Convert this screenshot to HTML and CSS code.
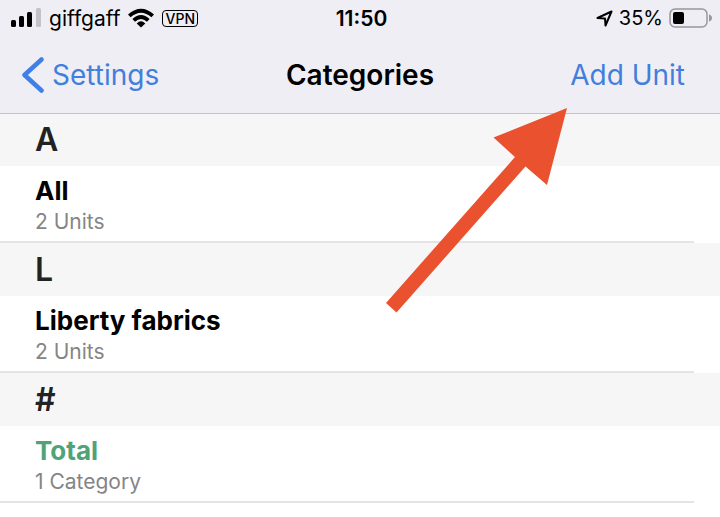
FILE: index.html
```html
<!DOCTYPE html>
<html lang="en">
<head>
    <meta charset="UTF-8">
    <meta name="viewport" content="width=device-width, initial-scale=1.0">
    <title>Categories</title>
    <link rel="stylesheet" href="styles.css">
</head>
<body>
    <header class="top">
        <div class="status-bar">
            <div class="status-left">
                <svg class="signal" width="30" height="20" viewBox="0 0 30 20" aria-hidden="true">
                    <rect x="0" y="12" width="5" height="7" rx="1.5"/>
                    <rect x="8" y="8" width="5" height="11" rx="1.5"/>
                    <rect x="16" y="4" width="5" height="15" rx="1.5"/>
                    <rect x="25" y="0" width="5" height="19" rx="1.5" fill="#c3c2c8"/>
                </svg>
                <span class="carrier">giffgaff</span>
                <svg class="wifi" width="26" height="20" viewBox="0 0 26 20" aria-hidden="true">
                    <path d="M0 6.5Q13-5 26 6.5L23.4 9.2Q13 .2 2.6 9.2Z"/>
                    <path d="M4.4 11Q13 3 21.6 11L19 13.7Q13 8.2 7 13.7Z"/>
                    <path d="M8.7 15.4Q13 11.3 17.3 15.4L13 19.6Z"/>
                </svg>
                <span class="vpn">VPN</span>
            </div>
            <span class="time">11:50</span>
            <div class="status-right">
                <svg class="location" width="17" height="17" viewBox="0 0 17 17" aria-hidden="true">
                    <path d="M1.5 8L15.5 1.5L9.5 15.5L9 8.5Z" fill="none" stroke="#000" stroke-width="2" stroke-linejoin="round"/>
                </svg>
                <span class="percent">35%</span>
                <svg class="battery" width="43" height="20" viewBox="0 0 43 20" aria-hidden="true">
                    <rect x="1" y="1" width="37" height="18" rx="5" fill="none" stroke="#98979d" stroke-width="1.5"/>
                    <rect x="4" y="4" width="11" height="12" rx="2"/>
                    <path d="M40 6.5Q43 7.5 43 10T40 13.5Z" fill="#98979d"/>
                </svg>
            </div>
        </div>
        <nav class="nav-bar">
            <a class="back" href="#">
                <svg width="22" height="36" viewBox="0 0 22 36" aria-hidden="true">
                    <path d="M19.5 2.5L2.5 18L19.5 33.5" fill="none" stroke="#3f80e8" stroke-width="4.5" stroke-linecap="round" stroke-linejoin="round"/>
                </svg>
                Settings
            </a>
            <h1>Categories</h1>
            <button class="add-unit" type="button">Add Unit</button>
        </nav>
    </header>

    <main class="list">
        <section>
            <h2>A</h2>
            <div class="row">
                <div class="name">All</div>
                <div class="count">2 Units</div>
            </div>
        </section>
        <section>
            <h2>L</h2>
            <div class="row">
                <div class="name">Liberty fabrics</div>
                <div class="count">2 Units</div>
            </div>
        </section>
        <section>
            <h2>#</h2>
            <div class="row">
                <div class="name total">Total</div>
                <div class="count">1 Category</div>
            </div>
        </section>
    </main>

    <!-- arrow pointing at Add Unit -->
    <svg class="arrow" width="182" height="205" viewBox="0 0 182 205" aria-hidden="true">
        <path d="M181 0L107.5 29.5L129 49L0 195L10.5 204.5L139.5 58.5L161 77Z" fill="#ea512e"/>
    </svg>
</body>
</html>
```
FILE: styles.css
```css
body {
    font-family: Inter, "Liberation Sans", sans-serif;
    margin: 0;
    background-color: #fff;
    color: #000;
    position: relative;
}
.top {
    position: relative;
    background-color: #efeef4;
    box-shadow: 0 1px 0 #c3c2c8; /* hairline over the list */
}
.status-bar, .nav-bar {
    display: grid;
    grid-template-columns: 1fr auto 1fr;
    align-items: center;
}
.status-bar {
    height: 36px;
    padding: 0 8px 0 11px;
    font-size: 20px;
}
.status-left, .status-right {
    display: flex;
    align-items: center;
    gap: 9px;
}
.status-left {
    gap: 8px;
}
.status-right {
    justify-content: flex-end;
    gap: 6px;
}
.carrier {
    font-size: 21px;
}
.vpn {
    font-size: 14px;
    line-height: 15px;
    font-weight: 500;
    padding: 0 2px;
    border: 1px solid #000;
    border-radius: 4px;
}
.time {
    font-size: 21px;
    font-weight: 600;
}
.nav-bar {
    height: 77px;
    padding: 0 22px;
}
.back, .add-unit {
    font-size: 28px;
    color: #427fdc;
}
.back {
    display: flex;
    align-items: center;
    gap: 8px;
    text-decoration: none;
}
.add-unit {
    font-family: inherit;
    justify-self: end;
    margin-right: 13px;
    padding: 0;
    border: none;
    background: none;
    cursor: pointer;
}
h1 {
    margin: 0;
    font-size: 28px;
    font-weight: 600;
}
h2 {
    margin: 0;
    padding: 1px 35px 0;
    font-size: 32px;
    line-height: 52px;
    font-weight: 600;
    color: #222;
    background-color: #f6f6f6;
}
.row {
    margin-right: 26px;
    padding: 9px 0 4px 35px;
    border-bottom: 2px solid #e4e4e4;
}
.name {
    font-size: 26px;
    line-height: 32px;
    font-weight: 700;
}
.total {
    color: #50a377;
}
.count {
    font-size: 21px;
    line-height: 30px;
    color: #858585;
}
.arrow {
    position: absolute;
    top: 108px;
    right: 152px;
    pointer-events: none;
}
```
